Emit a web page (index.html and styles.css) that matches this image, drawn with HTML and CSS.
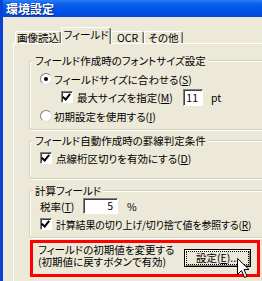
FILE: index.html
```html
<!DOCTYPE html>
<html lang="ja">
<head>
    <meta charset="UTF-8">
    <title>環境設定</title>
    <link rel="stylesheet" href="styles.css">
</head>
<body>
    <div class="window">
        <div class="titlebar"><span class="title">環境設定</span></div>
        <div class="client">
            <div class="tabs">
                <div class="tab t1">画像読込</div>
                <div class="tab t2 active">フィールド</div>
                <div class="tab t3">OCR</div>
                <div class="tab t4">その他</div>
            </div>
            <div class="panel">
                <div class="group g1">
                    <span class="group-title">フィールド作成時のフォントサイズ設定</span>
                    <div class="row">
                        <span class="radio on"></span>
                        <span>フィールドサイズに合わせる(<u>S</u>)</span>
                    </div>
                    <div class="row sub">
                        <span class="label-box">
                            <span class="check on"></span>
                            <span>最大サイズを指定(<u>M</u>)</span>
                        </span>
                        <span class="field size">11</span>
                        <span class="unit">pt</span>
                    </div>
                    <div class="row last">
                        <span class="radio"></span>
                        <span>初期設定を使用する(<u>I</u>)</span>
                    </div>
                </div>

                <div class="group g2">
                    <span class="group-title">フィールド自動作成時の罫線判定条件</span>
                    <div class="row">
                        <span class="check on"></span>
                        <span>点線桁区切りを有効にする(<u>D</u>)</span>
                    </div>
                </div>

                <div class="group g3">
                    <span class="group-title">計算フィールド</span>
                    <div class="row tax">
                        <span class="tax-label">税率(<u>T</u>)</span>
                        <span class="field rate">5</span>
                        <span class="unit">%</span>
                    </div>
                    <div class="row">
                        <span class="check on"></span>
                        <span class="tight">計算結果の切り上げ/切り捨て値を参照する(<u>R</u>)</span>
                    </div>
                </div>

                <div class="note">
                    <div class="note-text">
                        <div>フィールドの初期値を変更する</div>
                        <div>(初期値に戻すボタンで有効)</div>
                    </div>
                    <div class="button"><span class="focus">設定(<u>E</u>)...</span></div>
                </div>
            </div>
        </div>
    </div>

    <svg class="cursor" width="13" height="21" viewBox="0 0 13 21">
        <path d="M0.5 0.5 L0.5 16.5 L4.5 12.5 L7.5 19.5 L10 18.5 L7 11.5 L12 11.5 Z" fill="#fff" stroke="#000" stroke-width="1"></path>
    </svg>
</body>
</html>
```

FILE: styles.css
```css
body {
    margin: 0;
    width: 262px;
    height: 281px;
    overflow: hidden;
    position: relative;
    background: #ece9d8;
    font-family: "Noto Sans CJK JP", sans-serif;
    font-size: 10.5px;
    font-feature-settings: "palt";
    color: #000;
}
u {
    text-decoration: underline;
}
.window {
    display: flex;
    flex-direction: column;
    width: 300px;
    height: 281px;
    border-left: 3px solid #0842d4;
}
.titlebar {
    height: 21px;
    display: flex;
    align-items: center;
    padding-left: 3px;
    background: linear-gradient(#2a7ef8, #0860ec 25%, #0054e6 60%, #0348d8);
}
.title {
    color: #fff;
    font-weight: bold;
    font-size: 12px;
    text-shadow: 1px 1px 0 #0b2a8a;
}
.client {
    flex: 1;
    padding: 11px 0 0 10px;
}
.tabs {
    display: flex;
    align-items: flex-end;
    height: 15px;
    padding-left: 2px;
}
.tab {
    box-sizing: border-box;
    height: 12px;
    line-height: 11px;
    text-align: center;
    border-top: 1px solid #fff;
    border-left: 1px solid #fff;
    border-right: 1px solid #716f64;
    border-radius: 2px 2px 0 0;
    box-shadow: inset -1px 0 #aca899;
}
.t1 { width: 46px; }
.t2 { width: 50px; }
.t3 { width: 33px; }
.t4 { width: 39px; }
.tab.active {
    position: relative;
    height: 17px;
    line-height: 13px;
    margin-bottom: -1px;
    background: #ece9d8;
}
.panel {
    height: 240px;
    border-top: 1px solid #fff;
    border-left: 1px solid #fff;
    padding: 16px 0 0 15px;
}
.group {
    width: 250px;
    padding: 0 0 4px 10px;
    border: 1px solid #d0d0bf;
    border-radius: 3px;
    box-shadow: 1px 1px 0 #fff, inset 1px 1px 0 #fff;
}
.group-title {
    display: block;
    width: fit-content;
    height: 13px;
    line-height: 13px;
    margin: -7px 0 0 -7px;
    padding: 0 2px;
    background: #ece9d8;
}
.row {
    display: flex;
    align-items: center;
    gap: 2px;
    height: 18px;
}
.g1 .group-title + .row {
    margin-top: 3px;
}
.g1 .row.last {
    margin-top: 1px;
}
.g2 {
    margin-top: 10px;
    padding-bottom: 11px;
}
.g2 .row {
    margin-top: 2px;
}
.g3 {
    margin-top: 11px;
}
.tight {
    font-size: 10px;
    letter-spacing: -0.2px;
}
.radio {
    box-sizing: border-box;
    width: 12px;
    height: 12px;
    border-radius: 50%;
    background: #fff;
    border: 1px solid #808080;
    border-right-color: #e0e0e0;
    border-bottom-color: #e0e0e0;
    display: flex;
    align-items: center;
    justify-content: center;
}
.radio.on::after {
    content: "";
    width: 4px;
    height: 4px;
    border-radius: 50%;
    background: #000;
}
.check {
    box-sizing: border-box;
    width: 12px;
    height: 12px;
    background: #fff;
    border: 1px solid;
    border-color: #808080 #fff #fff #808080;
    box-shadow: inset 1px 1px 0 #404040;
    margin-right: 2px;
    position: relative;
}
.check.on::after {
    content: "";
    position: absolute;
    left: 2px;
    top: 0px;
    width: 3px;
    height: 6px;
    border: solid #000;
    border-width: 0 2px 2px 0;
    transform: rotate(40deg);
}
.sub {
    margin-left: 21px;
}
.label-box {
    display: flex;
    align-items: center;
    gap: 2px;
    width: 120px;
}
.field {
    box-sizing: border-box;
    background: #fff;
    border: 1px solid;
    border-color: #808080 #fff #fff #808080;
    box-shadow: inset 1px 1px 0 #404040;
    text-align: right;
    padding-right: 4px;
}
.size {
    width: 20px;
    height: 17px;
    line-height: 15px;
}
.rate {
    width: 35px;
    height: 16px;
    line-height: 14px;
}
.unit {
    margin-left: 6px;
}
.tax-label {
    width: 41px;
}
.tax .unit {
    margin-left: 7px;
}
.note {
    display: flex;
    justify-content: space-between;
    width: 213px;
    height: 31px;
    margin: 2px 0 0 1px;
    padding: 0 6px 0 5px;
    border: 3px solid #f00;
}
.note-text {
    margin-top: 1px;
    line-height: 12px;
}
.button {
    box-sizing: border-box;
    width: 67px;
    height: 18px;
    margin-top: 6px;
    border: 1px solid #000;
    box-shadow: inset 1px 1px 0 #fff, inset -1px -1px 0 #808080;
    display: flex;
    align-items: center;
    justify-content: center;
    padding: 2px;
}
.focus {
    flex: 1;
    height: 12px;
    line-height: 12px;
    text-align: center;
    outline: 1px dotted #000;
}
.cursor {
    position: absolute;
    left: 237px;
    top: 258px;
}
```
